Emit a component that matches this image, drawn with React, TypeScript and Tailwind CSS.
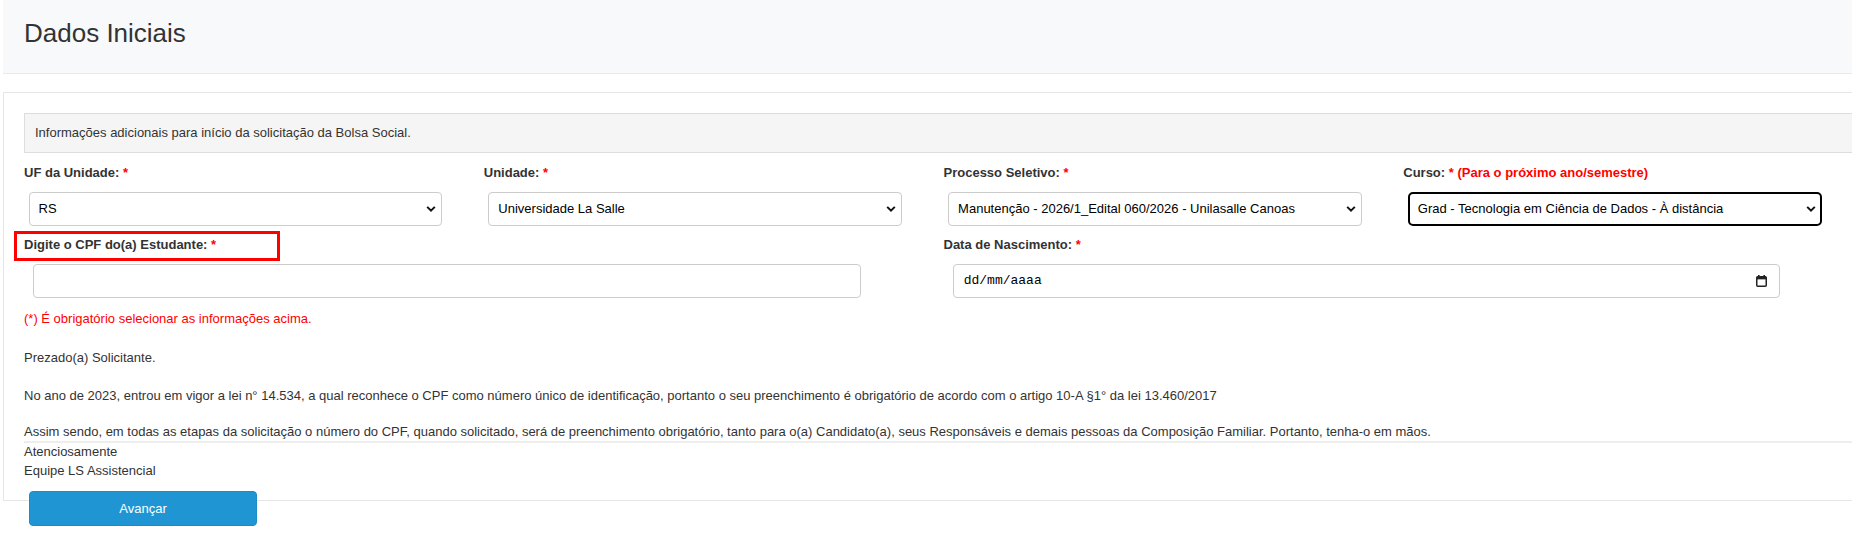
const fontSans = "font-['Liberation_Sans',Arial,Helvetica,sans-serif]";

function Chevron() {
  return (
    <svg
      width="10"
      height="7"
      viewBox="0 0 10 7"
      className="pointer-events-none absolute right-[6px] top-1/2 -translate-y-1/2"
    >
      <path d="M1.2 1.4 L5 5.2 L8.8 1.4" fill="none" stroke="#111" strokeWidth="2" />
    </svg>
  );
}

function CalendarIcon() {
  return (
    <svg width="11" height="12" viewBox="0 0 11 12">
      <rect x="2" y="0" width="1.6" height="2" fill="#222" />
      <rect x="7.4" y="0" width="1.6" height="2" fill="#222" />
      <rect x="0.75" y="1.75" width="9.5" height="9.5" rx="1" fill="none" stroke="#222" strokeWidth="1.5" />
      <rect x="0.75" y="1.75" width="9.5" height="2.6" fill="#222" />
    </svg>
  );
}

interface FieldLabelProps {
  text: string;
  extra?: string;
}

function FieldLabel({ text, extra }: FieldLabelProps) {
  return (
    <label className="block h-[19px] text-[13px] leading-[19px] font-bold text-[#333]">
      {text} <span className="text-[#ff0000]">*</span>
      {extra && <span className="text-[#ff0000]"> {extra}</span>}
    </label>
  );
}

interface SelectFieldProps {
  label: string;
  value: string;
  extra?: string;
  focused?: boolean;
}

function SelectField({ label, value, extra, focused }: SelectFieldProps) {
  return (
    <div>
      <FieldLabel text={label} extra={extra} />
      <div className="relative mt-[10px] ml-[1%] w-[90%]">
        <select
          defaultValue={value}
          className={
            focused
              ? "block h-[34px] w-full appearance-none rounded-[5px] border-2 border-black bg-white pl-[8px] text-[13px] text-black outline-none"
              : "block h-[34px] w-full appearance-none rounded-[4px] border border-[#cccccc] bg-white pl-[9px] text-[13px] text-black outline-none"
          }
        >
          <option value={value}>{value}</option>
        </select>
        <Chevron />
      </div>
    </div>
  );
}

export default function App() {
  return (
    <div className={`h-[547px] w-[1852px] overflow-hidden bg-white text-[13px] text-[#333] ${fontSans}`}>
      <div className="w-[1900px] pl-[3px]">
        <div className="h-[74px] border-b border-[#e9e9e9] bg-[#f8f9fa] pl-[21px] pt-[18px]">
          <h1 className="text-[26px] leading-[30px] font-normal text-[#333]">Dados Iniciais</h1>
        </div>

        <div className="mt-[18px] border border-[#e6e6e6] p-5">
          <div className="flex h-[40px] items-center border border-[#dddddd] bg-[#f5f5f5] pl-[10px] text-[13px] text-[#333]">
            Informações adicionais para início da solicitação da Bolsa Social.
          </div>

          <div className="mt-[10px] grid w-[1839px] grid-cols-4">
            <SelectField label="UF da Unidade:" value="RS" />
            <SelectField label="Unidade:" value="Universidade La Salle" />
            <SelectField
              label="Processo Seletivo:"
              value="Manutenção - 2026/1_Edital 060/2026 - Unilasalle Canoas"
            />
            <SelectField
              label="Curso:"
              extra="(Para o próximo ano/semestre)"
              value="Grad - Tecnologia em Ciência de Dados - À distância"
              focused
            />
          </div>

          <div className="mt-[9px] grid w-[1839px] grid-cols-2">
            <div className="relative">
              <div className="pointer-events-none absolute -left-[10px] -top-[4px] h-[30px] w-[266px] border-[3px] border-[#ff0000]" />
              <FieldLabel text="Digite o CPF do(a) Estudante:" />
              <input
                type="text"
                className="mt-[10px] ml-[1%] block h-[34px] w-[90%] rounded-[4px] border border-[#cccccc] bg-white px-[10px] text-[13px] outline-none"
              />
            </div>
            <div>
              <FieldLabel text="Data de Nascimento:" />
              <div className="mt-[10px] ml-[1%] flex h-[34px] w-[90%] items-center justify-between rounded-[4px] border border-[#cccccc] bg-white pl-[10px] pr-[12px]">
                <span className="font-['Liberation_Mono',monospace] text-[13px] text-black">dd/mm/aaaa</span>
                <CalendarIcon />
              </div>
            </div>
          </div>

          <p className="mt-[11px] leading-[19px] text-[#ff0000]">
            (*) É obrigatório selecionar as informações acima.
          </p>
          <p className="mt-[20px] leading-[19px]">Prezado(a) Solicitante.</p>
          <p className="mt-[19px] leading-[19px]">
            No ano de 2023, entrou em vigor a lei n° 14.534, a qual reconhece o CPF como número único de identificação, portanto o seu preenchimento é obrigatório de acordo com o artigo 10-A §1° da lei 13.460/2017
          </p>
          <p className="mt-[17px] leading-[19px]">
            Assim sendo, em todas as etapas da solicitação o número do CPF, quando solicitado, será de preenchimento obrigatório, tanto para o(a) Candidato(a), seus Responsáveis e demais pessoas da Composição Familiar. Portanto, tenha-o em mãos.
          </p>
          <hr className="h-0 border-0 border-t-2 border-[#eeeeee]" />
          <p className="-mt-[1px] leading-[19px]">Atenciosamente</p>
          <p className="leading-[19px]">Equipe LS Assistencial</p>
        </div>

        <button
          type="button"
          className="relative -mt-[10px] ml-[26px] block h-[35px] w-[228px] rounded-[4px] border border-[#1b8cc8] bg-[#1f96d3] text-[13px] text-white"
        >
          Avançar
        </button>
      </div>
    </div>
  );
}
